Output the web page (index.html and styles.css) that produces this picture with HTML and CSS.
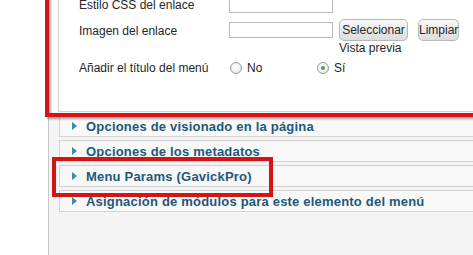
FILE: index.html
```html
<!DOCTYPE html>
<html lang="es">
<head>
    <meta charset="UTF-8">
    <title>Elemento del menú</title>
    <link rel="stylesheet" href="styles.css">
</head>
<body>
    <div class="page">
        <div class="gutter"></div>

        <div class="main">
            <div class="details">
                <div class="panel">
                    <div class="row row-css">
                        <label class="label">Estilo CSS del enlace</label>
                        <input type="text" class="field">
                    </div>

                    <div class="row row-image">
                        <label class="label">Imagen del enlace</label>
                        <div class="image-field">
                            <input type="text" class="field">
                            <button class="btn btn-select">Seleccionar</button>
                            <button class="btn btn-clear">Limpiar</button>
                            <span class="preview">Vista previa</span>
                        </div>
                    </div>

                    <div class="row row-title">
                        <label class="label">Añadir el título del menú</label>
                        <div class="radios">
                            <span class="option"><span class="radio"></span>No</span>
                            <span class="option"><span class="radio checked"></span>Sí</span>
                        </div>
                    </div>
                </div>
            </div>

            <div class="sliders">
                <div class="slider"><span class="arrow"></span>Opciones de visionado en la página</div>
                <div class="slider"><span class="arrow"></span>Opciones de los metadatos</div>
                <div class="slider"><span class="arrow"></span>Menu Params (GavickPro)</div>
                <div class="slider"><span class="arrow"></span>Asignación de módulos para este elemento del menú</div>
            </div>
        </div>
    </div>

    <!-- marcas rojas del pantallazo -->
    <div class="mark mark-big"></div>
    <div class="mark mark-small"></div>
</body>
</html>
```

FILE: styles.css
```css
* {
    margin: 0;
    padding: 0;
    box-sizing: border-box;
}

body {
    font-family: 'Liberation Sans', Arial, sans-serif;
    font-size: 12px;
    color: #262626;
    background: white;
    height: 255px;
    overflow: hidden;
    position: relative;
}

.page {
    display: flex;
    min-height: 255px;
}

.gutter {
    width: 48px;
    background: white;
}

.main {
    flex: 1;
    border-left: 1px solid #c6c6c6;
    background: #f4f4f4;
    overflow: hidden;
}

.details {
    background: white;
    padding-left: 9px;
    margin-top: -10px;
}

.panel {
    border: 1px solid #d2d2d2;
    border-right: none;
    background: white;
    padding: 0 0 30px 20px;
}

.row {
    display: flex;
    align-items: center;
}

.label {
    width: 150px;
    line-height: 14px;
}

.row-css {
    height: 27px;
}

.row-image {
    align-items: flex-start;
    padding-top: 1px;
    height: 37px;
}

.row-image .label {
    margin-top: 5px;
}

.row-title {
    height: 26px;
}

.field {
    width: 104px;
    height: 16px;
    border: 1px solid #b9b9b9;
    background: white;
}

.row-css .field {
    height: 17px;
}

.image-field {
    display: grid;
    grid-template-columns: 104px 69px 45px;
    column-gap: 6px;
    align-items: center;
}

.btn-clear {
    margin-left: 4px;
}

.btn {
    height: 22px;
    border: 1px solid #b8b8b8;
    border-radius: 5px;
    background: linear-gradient(#f8f8f8, #dcdcdc);
    font-family: 'Liberation Sans', Arial, sans-serif;
    font-size: 12px;
    color: #262626;
    padding: 0;
}

.preview {
    grid-column: 2 / 4;
    line-height: 13px;
    margin-top: 1px;
}

.radios {
    display: flex;
    padding-left: 1px;
}

.option {
    display: flex;
    align-items: center;
    gap: 5px;
    min-width: 87px;
}

.radio {
    width: 12px;
    height: 12px;
    border: 1px solid #8f9aa3;
    border-radius: 50%;
    background: radial-gradient(circle at 40% 35%, white, #e4e4e4);
    display: flex;
    align-items: center;
    justify-content: center;
}

.radio.checked::after {
    content: "";
    width: 4px;
    height: 4px;
    border-radius: 50%;
    background: #4aa54a;
}

.sliders {
    margin-left: 10px;
    margin-right: -10px;
    padding-top: 3px;
}

.slider {
    display: flex;
    align-items: center;
    height: 22px;
    margin-bottom: 3px;
    border: 1px solid #d3d3d3;
    background: #f8f8f8;
    padding-left: 12px;
    font-size: 13px;
    font-weight: bold;
    letter-spacing: 0.2px;
    color: #1d5878;
}

.arrow {
    width: 0;
    height: 0;
    border-top: 4px solid transparent;
    border-bottom: 4px solid transparent;
    border-left: 5px solid #3a8bb0;
    margin-right: 9px;
}

.mark {
    position: absolute;
    border: 4px solid #d41515;
    filter: drop-shadow(2px 2px 1px rgba(0, 0, 0, 0.35));
    pointer-events: none;
}

.mark-big {
    left: 45px;
    top: -20px;
    right: -20px;
    height: 137px;
}

.mark-small {
    left: 52px;
    top: 157px;
    width: 221px;
    height: 40px;
    filter: none;
}
```
